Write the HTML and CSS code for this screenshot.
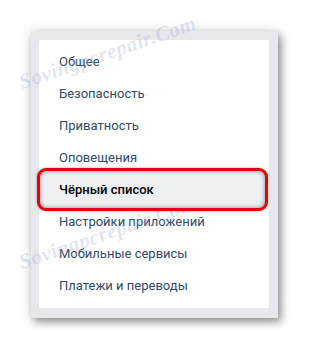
FILE: index.html
```html
<!DOCTYPE html>
<html lang="ru">
<head>
    <meta charset="UTF-8">
    <meta name="viewport" content="width=device-width, initial-scale=1.0">
    <title>Настройки</title>
    <link rel="stylesheet" href="styles.css">
</head>
<body>
    <div class="frame">
        <div class="menu">
            <a class="menu-item" href="#">Общее</a>
            <a class="menu-item" href="#">Безопасность</a>
            <a class="menu-item" href="#">Приватность</a>
            <a class="menu-item" href="#">Оповещения</a>
            <a class="menu-item selected" href="#">Чёрный список</a>
            <a class="menu-item" href="#">Настройки приложений</a>
            <a class="menu-item" href="#">Мобильные сервисы</a>
            <a class="menu-item" href="#">Платежи и переводы</a>
        </div>
    </div>

    <!-- водяной знак -->
    <div class="watermark wm-top">Sovingpcrepair.Com</div>
    <div class="watermark wm-bottom">Sovingpcrepair.Com</div>
</body>
</html>
```

FILE: styles.css
```css
body {
    margin: 0;
    background-color: #fff;
    font-family: Roboto, "Liberation Sans", Arial, sans-serif;
    position: relative;
    height: 351px;
    overflow: hidden;
}
.frame {
    margin: 31px 0 0 31px;
    width: 247px;
    height: 287px;
    padding: 9px 9px 10px 8px;
    box-sizing: border-box;
    background-color: #e7e8ec;
    box-shadow: 3px 4px 8px rgba(0,0,0,0.4), 0 0 14px rgba(0,0,0,0.12);
}
.menu {
    height: 100%;
    background-color: #fff;
    border-radius: 2px;
    padding-top: 6px;
    box-sizing: border-box;
    display: flex;
    flex-direction: column;
}
.menu-item {
    display: block;
    height: 32px;
    line-height: 32px;
    padding-left: 20px;
    font-size: 13px;
    color: #304a68;
    text-decoration: none;
    position: relative;
}
.menu-item.selected {
    color: #000;
    font-weight: 500;
    z-index: 1;
}
/* красная рамка выделения */
.menu-item.selected::before {
    content: "";
    position: absolute;
    left: -2px;
    right: 1px;
    top: -6px;
    bottom: -5px;
    border: 3px solid #e8000b;
    border-radius: 9px;
    background-color: #eff0f3;
    box-shadow: inset 0 0 4px rgba(0,0,0,0.45), 0 0 3px rgba(0,0,0,0.35);
    z-index: -1;
}
.watermark {
    position: absolute;
    font-family: "Liberation Serif", serif;
    font-style: italic;
    font-weight: bold;
    font-size: 21px;
    color: rgba(150,165,210,0.28);
    transform-origin: left bottom;
    transform: rotate(-19deg);
    white-space: nowrap;
    letter-spacing: 0.5px;
    pointer-events: none;
}
.wm-top {
    left: 24px;
    top: 70px;
}
.wm-bottom {
    left: 24px;
    top: 250px;
}
```
